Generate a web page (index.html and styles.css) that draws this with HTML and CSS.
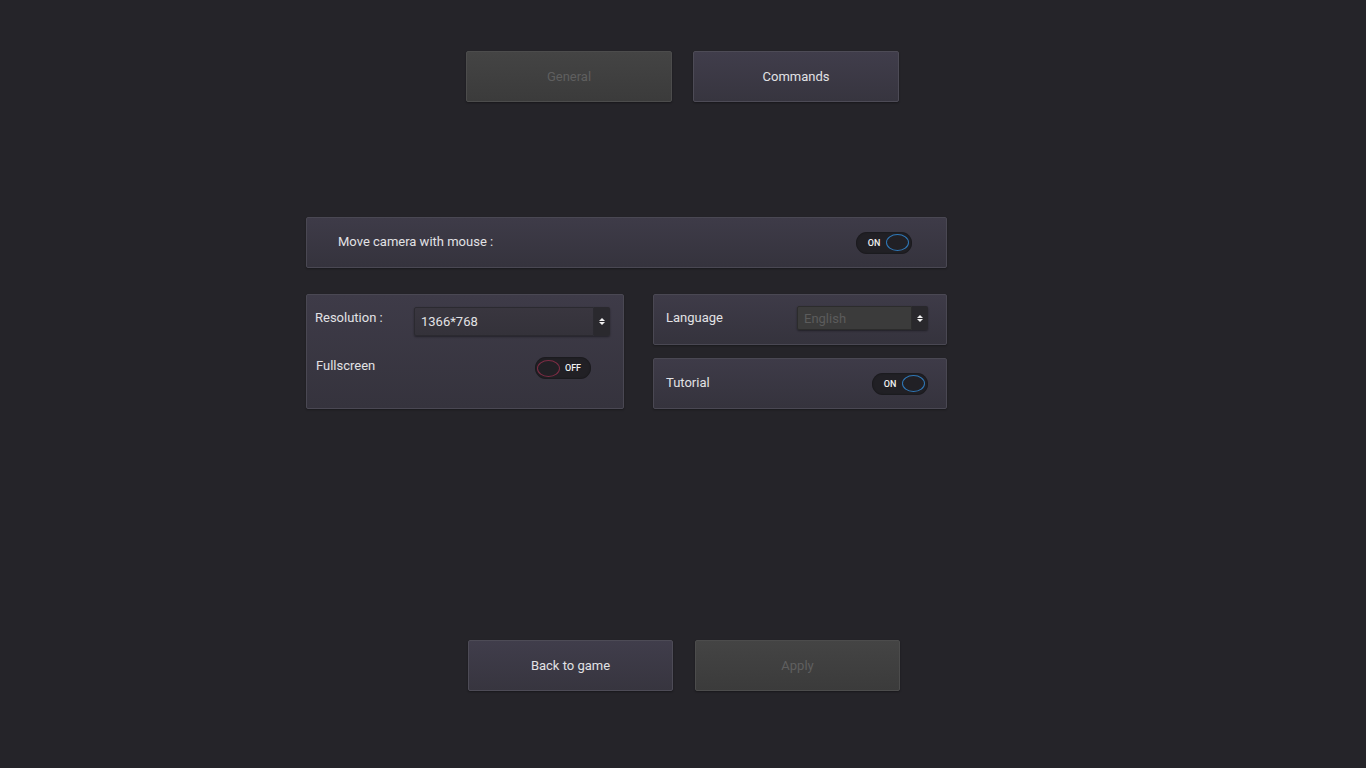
FILE: index.html
```html
<!DOCTYPE html>
<html lang="en">
<head>
    <meta charset="UTF-8">
    <meta name="viewport" content="width=device-width, initial-scale=1.0">
    <title>Options</title>
    <link rel="stylesheet" href="styles.css">
</head>
<body>
    <div class="options">
        <div class="tabs">
            <button class="btn disabled">General</button>
            <button class="btn">Commands</button>
        </div>

        <div class="settings">
            <div class="panel camera">
                <span class="label">Move camera with mouse :</span>
                <div class="toggle on"><span class="txt">ON</span><span class="knob"></span></div>
            </div>

            <div class="row">
                <div class="panel display">
                    <div class="line">
                        <span class="label">Resolution :</span>
                        <div class="select res">
                            <span class="value">1366*768</span>
                            <span class="arrows"><i class="up"></i><i class="down"></i></span>
                        </div>
                    </div>
                    <div class="line">
                        <span class="label">Fullscreen</span>
                        <div class="toggle off"><span class="knob"></span><span class="txt">OFF</span></div>
                    </div>
                </div>

                <div class="side">
                    <div class="panel small">
                        <span class="label lang-label">Language</span>
                        <div class="select lang disabled">
                            <span class="value">English</span>
                            <span class="arrows"><i class="up"></i><i class="down"></i></span>
                        </div>
                    </div>
                    <div class="panel small">
                        <span class="label">Tutorial</span>
                        <div class="toggle on"><span class="txt">ON</span><span class="knob"></span></div>
                    </div>
                </div>
            </div>
        </div>

        <div class="actions">
            <button class="btn">Back to game</button>
            <button class="btn disabled">Apply</button>
        </div>
    </div>
</body>
</html>
```

FILE: styles.css
```css
* {
    margin: 0;
    padding: 0;
    box-sizing: border-box;
}

body {
    font-family: 'Roboto', 'Liberation Sans', sans-serif;
    background: #252429;
    color: #e2e2e5;
    font-size: 13px;
    overflow: hidden;
}

.options {
    width: 1366px;
    height: 768px;
    padding-top: 51px;
}

/* buttons */
.btn {
    width: 206px;
    height: 51px;
    font-family: inherit;
    font-size: 13px;
    color: #e2e2e5;
    background: linear-gradient(#403d4b, #37353f);
    border: 1px solid #4d4b56;
    border-radius: 2px;
    box-shadow: 0 1px 2px rgba(0, 0, 0, 0.35);
    cursor: pointer;
}

.btn.disabled {
    color: #5f5f5f;
    background: linear-gradient(#444444, #3b3b3b);
    border-color: #4c4c4c;
    cursor: default;
}

.tabs {
    display: flex;
    gap: 21px;
    margin-left: 466px;
}

.actions {
    display: flex;
    gap: 22px;
    margin: 231px 0 0 468px;
}

.actions .btn {
    width: 205px;
}

/* panels */
.settings {
    width: 641px;
    margin: 115px 0 0 306px;
}

.panel {
    background: linear-gradient(#3e3b48, #35333d);
    border: 1px solid #4a4853;
    border-radius: 2px;
    box-shadow: 0 1px 2px rgba(0, 0, 0, 0.3);
}

.label {
    color: #e2e2e5;
    font-size: 13px;
}

.camera {
    height: 51px;
    display: flex;
    align-items: center;
    justify-content: space-between;
    padding: 0 34px 0 31px;
}

.camera .label {
    margin-top: -3px;
}

.row {
    display: flex;
    gap: 29px;
    margin-top: 26px;
}

.display {
    width: 318px;
    height: 115px;
    padding: 12px 13px 0 8px;
}

.display .line {
    display: flex;
    align-items: flex-start;
    justify-content: space-between;
}

.display .line .label {
    margin-top: 3px;
}

.display .line + .line {
    margin-top: 21px;
    padding: 0 19px 0 1px;
}

.display .line + .line .label {
    margin-top: 1px;
}

.side {
    width: 294px;
    display: flex;
    flex-direction: column;
    gap: 13px;
}

.small {
    height: 51px;
    display: flex;
    align-items: center;
    justify-content: space-between;
    padding: 0 18px 0 12px;
}

.small .label {
    margin-top: -3px;
}

.small .lang-label {
    margin-top: -5px;
}

/* select boxes */
.select {
    display: flex;
    height: 29px;
    border-radius: 2px;
    box-shadow: 0 1px 2px rgba(0, 0, 0, 0.4);
}

.select .value {
    flex: 1;
    display: flex;
    align-items: center;
    padding-left: 6px;
    background: linear-gradient(#39363f, #34323a);
    border: 1px solid #2b2a30;
    border-radius: 2px 0 0 2px;
    color: #e2e2e5;
    font-size: 13px;
}

.select .arrows {
    width: 16px;
    background: #2a292e;
    border-radius: 0 2px 2px 0;
    display: flex;
    flex-direction: column;
    align-items: center;
    justify-content: center;
    gap: 1px;
}

.select i {
    width: 0;
    height: 0;
    border-left: 3px solid transparent;
    border-right: 3px solid transparent;
}

.select i.up {
    border-bottom: 3px solid #f0f0f0;
}

.select i.down {
    border-top: 3px solid #f0f0f0;
}

.res {
    width: 196px;
}

.lang {
    width: 131px;
    height: 24px;
    margin-top: -3px;
}

.select.disabled .value {
    background: #3b3b3b;
    border-color: #2c2c2c;
    color: #5c5c5c;
}

.select.disabled .arrows {
    background: #29282c;
}

/* toggle switches */
.toggle {
    width: 56px;
    height: 22px;
    border-radius: 11px;
    background: #212025;
    box-shadow: inset 0 0 2px rgba(0, 0, 0, 0.6);
    display: flex;
    align-items: center;
    padding: 0 2px;
}

.toggle .txt {
    font-size: 9px;
    font-weight: 500;
    color: #f2f2f2;
    width: 28px;
    text-align: center;
}

.toggle .knob {
    width: 23px;
    height: 17px;
    border-radius: 50%;
    border: 1px solid #2f78b8;
}

.toggle.on .txt {
    padding-left: 4px;
}

.toggle.off .knob {
    border-color: #7c2c44;
}

.toggle.off .txt {
    padding-right: 2px;
}
```
